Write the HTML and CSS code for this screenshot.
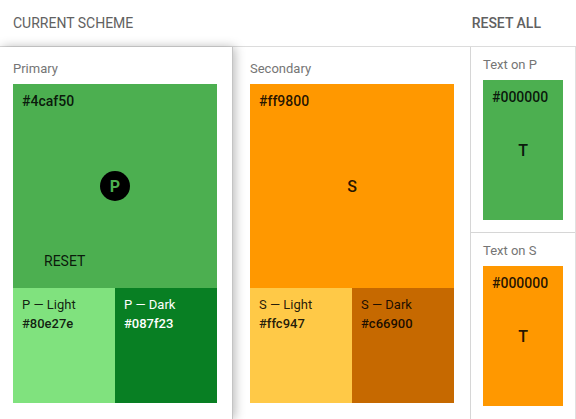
FILE: index.html
```html
<!DOCTYPE html>
<html>
<head>
<meta charset="utf-8">
<link rel="stylesheet" href="styles.css">
</head>
<body>
<header class="header">
  <span class="title">CURRENT SCHEME</span>
  <span class="reset-all">RESET ALL</span>
</header>
<main class="main">
  <section class="col col-primary">
    <div class="label">Primary</div>
    <div class="swatch main-swatch green">
      <div class="hex">#4caf50</div>
      <div class="badge">P</div>
      <div class="reset">RESET</div>
    </div>
    <div class="subrow">
      <div class="sub p-light">
        <div class="sub-name">P — Light</div>
        <div class="sub-hex">#80e27e</div>
      </div>
      <div class="sub p-dark">
        <div class="sub-name">P — Dark</div>
        <div class="sub-hex">#087f23</div>
      </div>
    </div>
  </section>
  <section class="col col-secondary">
    <div class="label">Secondary</div>
    <div class="swatch main-swatch orange">
      <div class="hex">#ff9800</div>
      <div class="letter">S</div>
    </div>
    <div class="subrow">
      <div class="sub s-light">
        <div class="sub-name">S — Light</div>
        <div class="sub-hex">#ffc947</div>
      </div>
      <div class="sub s-dark">
        <div class="sub-name">S — Dark</div>
        <div class="sub-hex">#c66900</div>
      </div>
    </div>
  </section>
  <section class="col col-text">
    <div class="text-block">
      <div class="label label-sm">Text on P</div>
      <div class="swatch text-swatch green">
        <div class="hex">#000000</div>
        <div class="letter">T</div>
      </div>
    </div>
    <div class="text-block">
      <div class="label label-sm">Text on S</div>
      <div class="swatch text-swatch orange">
        <div class="hex">#000000</div>
        <div class="letter">T</div>
      </div>
    </div>
  </section>
</main>
</body>
</html>
```
FILE: styles.css
```css
* { box-sizing: border-box; }
html, body {
  margin: 0;
  padding: 0;
  background: #fff;
  font-family: Roboto, "Liberation Sans", Arial, sans-serif;
  width: 576px;
  height: 419px;
  overflow: hidden;
}
.header {
  height: 47px;
  display: flex;
  align-items: center;
  justify-content: space-between;
  padding: 0 35px 0 13px;
  border-bottom: 1px solid #dcdcdc;
  font-size: 14px;
  color: #616161;
}
.title { font-weight: 400; }
.reset-all { font-weight: 500; }

.main {
  display: flex;
  height: 372px;
}
.col {
  height: 100%;
}
.col-primary {
  width: 233px;
  padding: 14px 0 0 13px;
  position: relative;
  z-index: 1;
  background: #fff;
  box-shadow: 2px 0 10px rgba(0,0,0,0.28);
  border-right: 1px solid #c4c4c4;
}
.col-secondary {
  width: 237px;
  padding: 14px 0 0 17px;
}
.col-text {
  width: 106px;
  border-left: 1px solid #d6d6d6;
  border-right: 1px solid #e0e0e0;
  display: flex;
  flex-direction: column;
}
.label {
  font-size: 13px;
  line-height: 16px;
  color: #757575;
  margin-bottom: 7px;
}
.swatch {
  display: grid;
  color: rgba(0,0,0,0.87);
}
.swatch > * { grid-area: 1 / 1; }
.main-swatch {
  width: 204px;
  height: 204px;
}
.green { background: #4caf50; }
.orange { background: #ff9800; }
.hex {
  align-self: start;
  justify-self: start;
  margin: 9px 0 0 9px;
  font-size: 14px;
  line-height: 16px;
  font-weight: 500;
}
.badge {
  place-self: center;
  width: 30px;
  height: 30px;
  border-radius: 50%;
  background: #000;
  color: #4caf50;
  font-size: 16px;
  font-weight: 700;
  display: flex;
  align-items: center;
  justify-content: center;
}
.reset {
  align-self: end;
  justify-self: start;
  margin: 0 0 19px 31px;
  font-size: 14px;
  line-height: 16px;
  font-weight: 400;
  color: rgba(0,0,0,0.87);
}
.letter {
  place-self: center;
  font-size: 16px;
  font-weight: 500;
  color: rgba(0,0,0,0.87);
}
.subrow {
  display: flex;
  width: 204px;
  height: 115px;
}
.sub {
  flex: 1;
  padding: 9px 0 0 9px;
  color: rgba(0,0,0,0.87);
}
.sub-name {
  font-size: 13px;
  line-height: 16px;
}
.sub-hex {
  font-size: 13px;
  line-height: 16px;
  font-weight: 500;
  margin-top: 3px;
}
.p-light { background: #80e27e; }
.p-dark { background: #087f23; color: #fff; }
.s-light { background: #ffc947; }
.s-dark { background: #c66900; }

.text-block {
  padding: 10px 0 12px 12px;
}
.text-block + .text-block {
  border-top: 1px solid #d6d6d6;
}
.text-swatch {
  width: 80px;
  height: 140px;
}
```
